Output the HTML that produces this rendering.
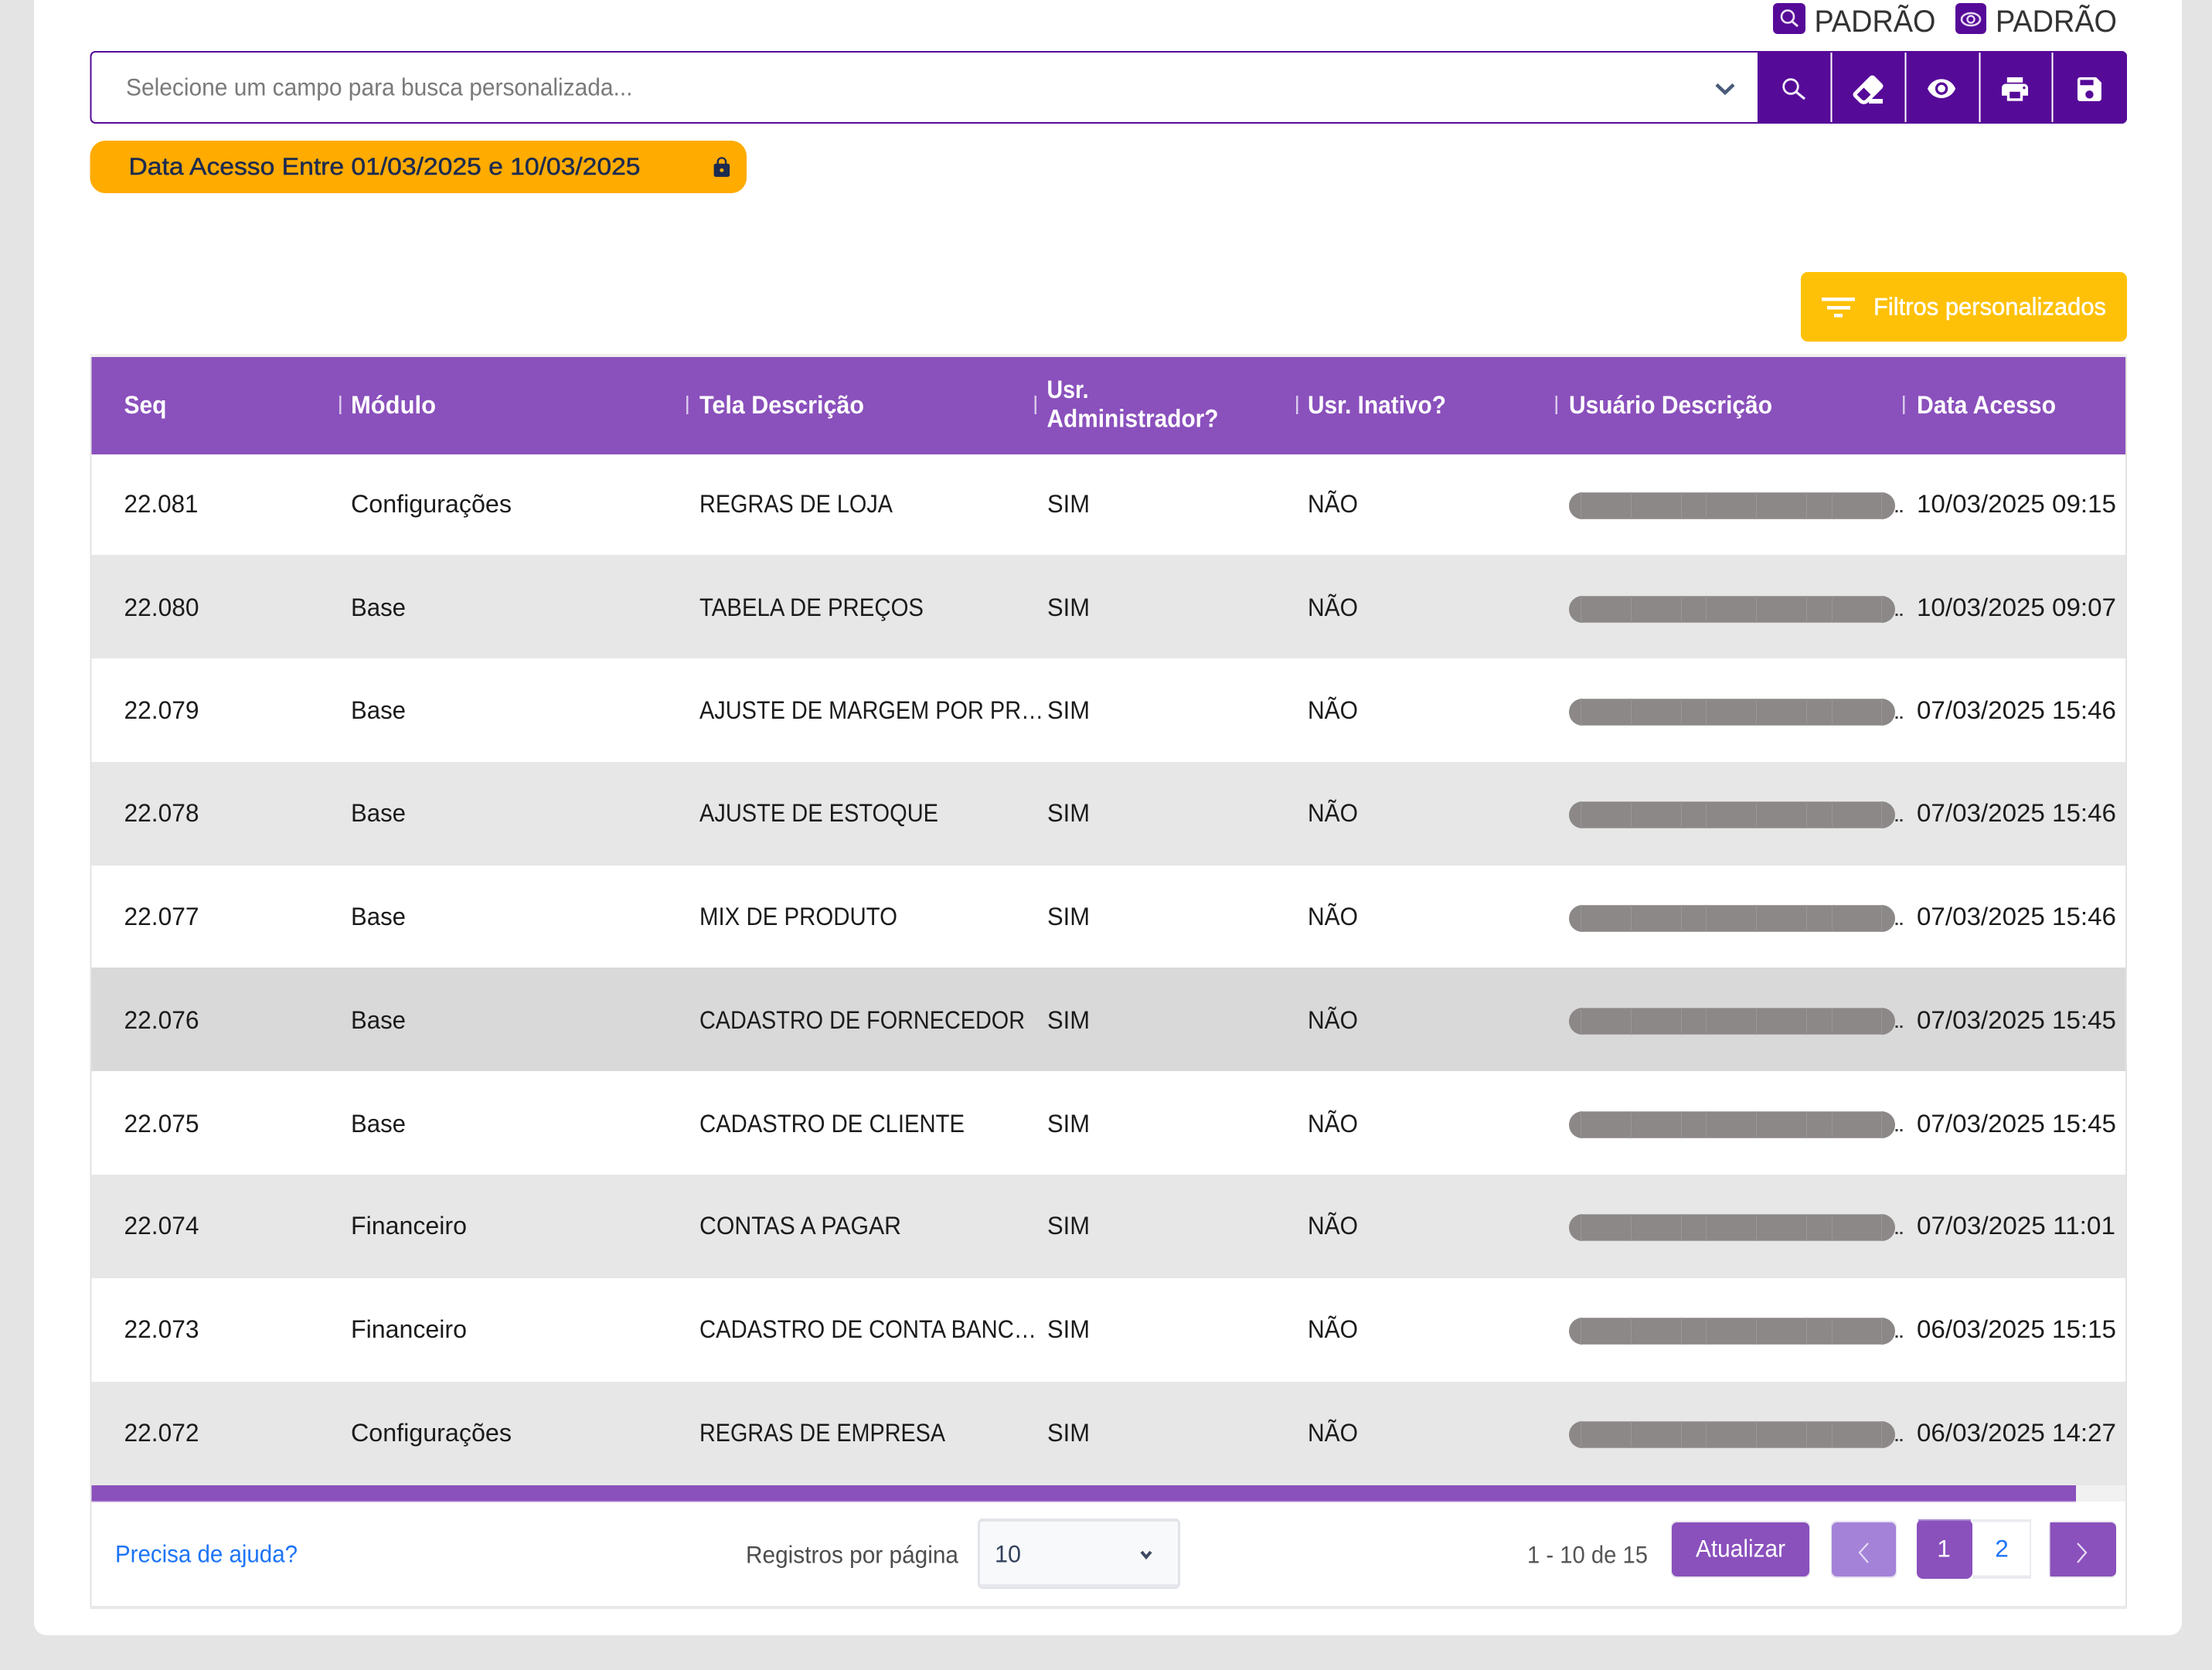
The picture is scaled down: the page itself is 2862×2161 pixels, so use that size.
<!DOCTYPE html>
<html lang="pt-BR">
<head>
<meta charset="utf-8">
<title>Acessos</title>
<style>
html,body{margin:0;padding:0;background:#e4e4e4;width:2862px;height:2161px;overflow:hidden}
svg{display:block}
text{font-family:"Liberation Sans",sans-serif;white-space:pre;transform:translate(-1px,-1px)}
.c{font-size:32.5px;fill:#1b1b1b}
.h{font-size:32px;font-weight:700;fill:#fff}
.j{font-size:31.5px}
</style>
</head>
<body>
<svg xmlns="http://www.w3.org/2000/svg" width="2862" height="2161" viewBox="0 0 2862 2161">
<defs>
<g id="bar">
<rect x="2030" y="0" width="422" height="35" rx="17.5" fill="#8c8888"/>
<rect x="2047" y="0" width="388" height="1" fill="#aaa7a7"/>
<rect x="2047" y="34" width="388" height="1" fill="#aaa7a7"/>
<rect x="2045" y="0" width="1" height="35" fill="#999696"/><rect x="2110" y="0" width="1" height="35" fill="#999696"/><rect x="2175" y="0" width="1" height="35" fill="#999696"/><rect x="2207" y="0" width="1" height="35" fill="#999696"/><rect x="2272" y="0" width="1" height="35" fill="#999696"/><rect x="2337" y="0" width="1" height="35" fill="#999696"/><rect x="2370" y="0" width="1" height="35" fill="#999696"/><rect x="2434" y="0" width="1" height="35" fill="#999696"/>
<rect x="2452.500" y="23" width="3" height="3" fill="#333"/><rect x="2458.500" y="23" width="3" height="3" fill="#333"/>
</g>
</defs>

<rect width="2862" height="2161" fill="#e4e4e4"/>
<path d="M44 0H2823V2100a16 16 0 0 1-16 16H60a16 16 0 0 1-16-16Z" fill="#fff"/>

<!-- top legends -->
<rect x="2294" y="4" width="42" height="40" rx="6" fill="#560a98"/>
<circle cx="2313" cy="21.5" r="8" fill="none" stroke="#ece2f4" stroke-width="2.6"/>
<path d="M2319 28L2326 34" stroke="#ece2f4" stroke-width="3" fill="none"/>
<text x="2348.500" y="42" font-size="40" fill="#333" textLength="157" lengthAdjust="spacingAndGlyphs">PADRÃO</text>
<rect x="2530" y="4" width="40" height="40" rx="6" fill="#560a98"/>
<ellipse cx="2550" cy="25" rx="12" ry="8" fill="none" stroke="#e6d9f0" stroke-width="2.600"/>
<circle cx="2550" cy="25" r="4.500" fill="none" stroke="#e6d9f0" stroke-width="2.400"/>
<text x="2583" y="42" font-size="40" fill="#333" textLength="157" lengthAdjust="spacingAndGlyphs">PADRÃO</text>

<!-- search bar -->
<path d="M123.500 67H2745a6 6 0 0 1 6 6V153a6 6 0 0 1-6 6H123.500a6 6 0 0 1-6-6V73a6 6 0 0 1 6-6Z" fill="#fff" stroke="#560a98" stroke-width="2"/>
<text class="j" x="164" y="124.500" fill="#7a7a7a" textLength="655.500" lengthAdjust="spacingAndGlyphs">Selecione um campo para busca personalizada...</text>
<path d="M2221 109.500L2232 120L2243 109.500" fill="none" stroke="#4a5b78" stroke-width="4.500"/>
<path d="M2274 66H2745a7 7 0 0 1 7 7V153a7 7 0 0 1-7 7H2274Z" fill="#560a98"/>
<rect x="2368.500" y="68" width="2" height="90" fill="#fff"/>
<rect x="2464.500" y="68" width="2" height="90" fill="#fff"/>
<rect x="2560.500" y="68" width="2" height="90" fill="#fff"/>
<rect x="2654.500" y="68" width="2" height="90" fill="#fff"/>
<!-- search -->
<circle cx="2317" cy="112" r="9.300" fill="none" stroke="#f4eef9" stroke-width="2.800"/>
<path d="M2324 119L2335 128" stroke="#f4eef9" stroke-width="3.200" fill="none"/>
<!-- eraser -->
<g transform="translate(2393.700 92.200) scale(1.940)"><path fill="#fff" stroke="#fff" stroke-width=".5" d="M16.24,3.56L21.19,8.5C21.97,9.29 21.97,10.55 21.19,11.34L12,20.53C10.44,22.09 7.91,22.09 6.34,20.53L2.81,17C2.03,16.21 2.03,14.95 2.81,14.16L13.41,3.56C14.2,2.78 15.46,2.78 16.24,3.56M4.22,15.58L7.76,19.11C8.54,19.9 9.8,19.9 10.59,19.11L14.12,15.58L9.17,10.63L4.22,15.58Z"/></g>
<rect x="2418" y="128" width="18" height="6" fill="#fff"/>
<!-- eye -->
<g transform="translate(2492.400 95) scale(1.640)"><path fill="#fff" fill-rule="evenodd" d="M12 4.500C7 4.500 2.730 7.610 1 12c1.730 4.390 6 7.500 11 7.500s9.270-3.110 11-7.500c-1.730-4.390-6-7.500-11-7.500zM12 17c-2.760 0-5-2.240-5-5s2.240-5 5-5 5 2.240 5 5-2.240 5-5 5z"/><circle cx="12" cy="12" r="3" fill="#fff"/></g>
<!-- print -->
<g transform="translate(2586.600 94.900) scale(1.700)"><path fill="#fff" d="M19 8H5c-1.660 0-3 1.340-3 3v6h4v4h12v-4h4v-6c0-1.660-1.340-3-3-3zm-3 11H8v-5h8v5zm3-7c-.55 0-1-.45-1-1s.45-1 1-1 1 .45 1 1-.45 1-1 1zm-1-9H6v4h12V3z"/></g>
<!-- save -->
<g transform="translate(2682.800 94.800) scale(1.720)"><path fill="#fff" d="M17 3H5c-1.110 0-2 .9-2 2v14c0 1.100.89 2 2 2h14c1.100 0 2-.9 2-2V7l-4-4zm-5 16c-1.660 0-3-1.340-3-3s1.340-3 3-3 3 1.340 3 3-1.340 3-3 3zm3-10H5V5h10v4z"/></g>

<!-- chip -->
<rect x="116.500" y="182" width="849.500" height="68" rx="20" fill="#ffab00"/>
<text class="j" x="167.500" y="227" fill="#1c2b50" stroke="#1c2b50" stroke-width=".5" textLength="662" lengthAdjust="spacingAndGlyphs">Data Acesso Entre 01/03/2025 e 10/03/2025</text>
<g transform="translate(918.500 202) scale(1.280 1.220)"><path fill="#1c2b50" d="M18 8h-1V6c0-2.760-2.240-5-5-5S7 3.240 7 6v2H6c-1.100 0-2 .9-2 2v10c0 1.100.9 2 2 2h12c1.100 0 2-.9 2-2V10c0-1.100-.9-2-2-2zm-6 9c-1.100 0-2-.9-2-2s.9-2 2-2 2 .9 2 2-.9 2-2 2zm3.100-9H8.900V6c0-1.710 1.390-3.100 3.100-3.100 1.710 0 3.100 1.390 3.100 3.100v2z"/></g>

<!-- filter button -->
<rect x="2330" y="352" width="422" height="90" rx="9" fill="#ffc107"/>
<rect x="2357" y="385" width="43" height="4.500" fill="#fff"/>
<rect x="2364" y="396" width="30" height="4.500" fill="#fff"/>
<rect x="2373" y="406" width="11" height="4.500" fill="#fff"/>
<text class="j" x="2425" y="408.500" fill="#fff" stroke="#fff" stroke-width=".5" textLength="301" lengthAdjust="spacingAndGlyphs">Filtros personalizados</text>

<!-- table frame -->
<rect x="116.500" y="458" width="2635.500" height="1624" fill="#e3e3e3"/>
<rect x="118.500" y="462" width="2631.500" height="1616" fill="#fff"/>
<rect x="116.500" y="458" width="2635.500" height="4" fill="#efefef"/>
<rect x="116.500" y="2078" width="2635.500" height="4" fill="#e9e9e9"/>

<!-- header -->
<rect x="118.500" y="462" width="2631.500" height="126" fill="#8a50bc"/>
<rect x="439" y="512" width="2.500" height="24" fill="#d9c8ea"/>
<rect x="888" y="512" width="2.500" height="24" fill="#d9c8ea"/>
<rect x="1338.500" y="512" width="2.500" height="24" fill="#d9c8ea"/>
<rect x="1677" y="512" width="2.500" height="24" fill="#d9c8ea"/>
<rect x="2012.500" y="512" width="2.500" height="24" fill="#d9c8ea"/>
<rect x="2462" y="512" width="2.500" height="24" fill="#d9c8ea"/>
<text class="h" x="161.500" y="536" textLength="55" lengthAdjust="spacingAndGlyphs">Seq</text>
<text class="h" x="455" y="536" textLength="110" lengthAdjust="spacingAndGlyphs">Módulo</text>
<text class="h" x="906" y="536" textLength="213" lengthAdjust="spacingAndGlyphs">Tela Descrição</text>
<text class="h" x="1355.500" y="516" textLength="54" lengthAdjust="spacingAndGlyphs">Usr.</text>
<text class="h" x="1355.500" y="553.500" textLength="222" lengthAdjust="spacingAndGlyphs">Administrador?</text>
<text class="h" x="1693" y="536" textLength="179" lengthAdjust="spacingAndGlyphs">Usr. Inativo?</text>
<text class="h" x="2031" y="536" textLength="263" lengthAdjust="spacingAndGlyphs">Usuário Descrição</text>
<text class="h" x="2481" y="536" textLength="180" lengthAdjust="spacingAndGlyphs">Data Acesso</text>

<!-- rows -->
<rect x="118.500" y="718" width="2631.500" height="134" fill="#e7e7e7"/>
<rect x="118.500" y="986" width="2631.500" height="134" fill="#e7e7e7"/>
<rect x="118.500" y="1252" width="2631.500" height="134" fill="#d9d9d9"/>
<rect x="118.500" y="1520" width="2631.500" height="134" fill="#e7e7e7"/>
<rect x="118.500" y="1788" width="2631.500" height="134" fill="#e7e7e7"/>

<use href="#bar" y="637"/><use href="#bar" y="771"/><use href="#bar" y="904"/><use href="#bar" y="1037"/><use href="#bar" y="1171"/><use href="#bar" y="1304"/><use href="#bar" y="1438"/><use href="#bar" y="1571"/><use href="#bar" y="1705"/><use href="#bar" y="1839"/>

<text class="c" x="161.500" y="664" textLength="96" lengthAdjust="spacingAndGlyphs">22.081</text>
<text class="c" x="455" y="664" textLength="208" lengthAdjust="spacingAndGlyphs">Configurações</text>
<text class="c" x="906" y="664" textLength="250" lengthAdjust="spacingAndGlyphs">REGRAS DE LOJA</text>
<text class="c" x="1356" y="664" textLength="55" lengthAdjust="spacingAndGlyphs">SIM</text>
<text class="c" x="1693" y="664" textLength="65" lengthAdjust="spacingAndGlyphs">NÃO</text>
<text class="c" x="2481" y="664" textLength="258" lengthAdjust="spacingAndGlyphs">10/03/2025 09:15</text>

<text class="c" x="161.500" y="798" textLength="97" lengthAdjust="spacingAndGlyphs">22.080</text>
<text class="c" x="455" y="798" textLength="71" lengthAdjust="spacingAndGlyphs">Base</text>
<text class="c" x="906" y="798" textLength="290" lengthAdjust="spacingAndGlyphs">TABELA DE PREÇOS</text>
<text class="c" x="1356" y="798" textLength="55" lengthAdjust="spacingAndGlyphs">SIM</text>
<text class="c" x="1693" y="798" textLength="65" lengthAdjust="spacingAndGlyphs">NÃO</text>
<text class="c" x="2481" y="798" textLength="258" lengthAdjust="spacingAndGlyphs">10/03/2025 09:07</text>

<text class="c" x="161.500" y="931" textLength="97" lengthAdjust="spacingAndGlyphs">22.079</text>
<text class="c" x="455" y="931" textLength="71" lengthAdjust="spacingAndGlyphs">Base</text>
<text class="c" x="906" y="931" textLength="445" lengthAdjust="spacingAndGlyphs">AJUSTE DE MARGEM POR PR…</text>
<text class="c" x="1356" y="931" textLength="55" lengthAdjust="spacingAndGlyphs">SIM</text>
<text class="c" x="1693" y="931" textLength="65" lengthAdjust="spacingAndGlyphs">NÃO</text>
<text class="c" x="2481" y="931" textLength="258" lengthAdjust="spacingAndGlyphs">07/03/2025 15:46</text>

<text class="c" x="161.500" y="1064" textLength="97" lengthAdjust="spacingAndGlyphs">22.078</text>
<text class="c" x="455" y="1064" textLength="71" lengthAdjust="spacingAndGlyphs">Base</text>
<text class="c" x="906" y="1064" textLength="309" lengthAdjust="spacingAndGlyphs">AJUSTE DE ESTOQUE</text>
<text class="c" x="1356" y="1064" textLength="55" lengthAdjust="spacingAndGlyphs">SIM</text>
<text class="c" x="1693" y="1064" textLength="65" lengthAdjust="spacingAndGlyphs">NÃO</text>
<text class="c" x="2481" y="1064" textLength="258" lengthAdjust="spacingAndGlyphs">07/03/2025 15:46</text>

<text class="c" x="161.500" y="1198" textLength="97" lengthAdjust="spacingAndGlyphs">22.077</text>
<text class="c" x="455" y="1198" textLength="71" lengthAdjust="spacingAndGlyphs">Base</text>
<text class="c" x="906" y="1198" textLength="256" lengthAdjust="spacingAndGlyphs">MIX DE PRODUTO</text>
<text class="c" x="1356" y="1198" textLength="55" lengthAdjust="spacingAndGlyphs">SIM</text>
<text class="c" x="1693" y="1198" textLength="65" lengthAdjust="spacingAndGlyphs">NÃO</text>
<text class="c" x="2481" y="1198" textLength="258" lengthAdjust="spacingAndGlyphs">07/03/2025 15:46</text>

<text class="c" x="161.500" y="1332" textLength="97" lengthAdjust="spacingAndGlyphs">22.076</text>
<text class="c" x="455" y="1332" textLength="71" lengthAdjust="spacingAndGlyphs">Base</text>
<text class="c" x="906" y="1332" textLength="421" lengthAdjust="spacingAndGlyphs">CADASTRO DE FORNECEDOR</text>
<text class="c" x="1356" y="1332" textLength="55" lengthAdjust="spacingAndGlyphs">SIM</text>
<text class="c" x="1693" y="1332" textLength="65" lengthAdjust="spacingAndGlyphs">NÃO</text>
<text class="c" x="2481" y="1332" textLength="258" lengthAdjust="spacingAndGlyphs">07/03/2025 15:45</text>

<text class="c" x="161.500" y="1466" textLength="97" lengthAdjust="spacingAndGlyphs">22.075</text>
<text class="c" x="455" y="1466" textLength="71" lengthAdjust="spacingAndGlyphs">Base</text>
<text class="c" x="906" y="1466" textLength="343" lengthAdjust="spacingAndGlyphs">CADASTRO DE CLIENTE</text>
<text class="c" x="1356" y="1466" textLength="55" lengthAdjust="spacingAndGlyphs">SIM</text>
<text class="c" x="1693" y="1466" textLength="65" lengthAdjust="spacingAndGlyphs">NÃO</text>
<text class="c" x="2481" y="1466" textLength="258" lengthAdjust="spacingAndGlyphs">07/03/2025 15:45</text>

<text class="c" x="161.500" y="1598" textLength="97" lengthAdjust="spacingAndGlyphs">22.074</text>
<text class="c" x="455" y="1598" textLength="150" lengthAdjust="spacingAndGlyphs">Financeiro</text>
<text class="c" x="906" y="1598" textLength="261" lengthAdjust="spacingAndGlyphs">CONTAS A PAGAR</text>
<text class="c" x="1356" y="1598" textLength="55" lengthAdjust="spacingAndGlyphs">SIM</text>
<text class="c" x="1693" y="1598" textLength="65" lengthAdjust="spacingAndGlyphs">NÃO</text>
<text class="c" x="2481" y="1598" textLength="257" lengthAdjust="spacingAndGlyphs">07/03/2025 11:01</text>

<text class="c" x="161.500" y="1732" textLength="97" lengthAdjust="spacingAndGlyphs">22.073</text>
<text class="c" x="455" y="1732" textLength="150" lengthAdjust="spacingAndGlyphs">Financeiro</text>
<text class="c" x="906" y="1732" textLength="436" lengthAdjust="spacingAndGlyphs">CADASTRO DE CONTA BANC…</text>
<text class="c" x="1356" y="1732" textLength="55" lengthAdjust="spacingAndGlyphs">SIM</text>
<text class="c" x="1693" y="1732" textLength="65" lengthAdjust="spacingAndGlyphs">NÃO</text>
<text class="c" x="2481" y="1732" textLength="258" lengthAdjust="spacingAndGlyphs">06/03/2025 15:15</text>

<text class="c" x="161.500" y="1866" textLength="97" lengthAdjust="spacingAndGlyphs">22.072</text>
<text class="c" x="455" y="1866" textLength="208" lengthAdjust="spacingAndGlyphs">Configurações</text>
<text class="c" x="906" y="1866" textLength="318" lengthAdjust="spacingAndGlyphs">REGRAS DE EMPRESA</text>
<text class="c" x="1356" y="1866" textLength="55" lengthAdjust="spacingAndGlyphs">SIM</text>
<text class="c" x="1693" y="1866" textLength="65" lengthAdjust="spacingAndGlyphs">NÃO</text>
<text class="c" x="2481" y="1866" textLength="258" lengthAdjust="spacingAndGlyphs">06/03/2025 14:27</text>

<!-- scrollbar -->
<rect x="118.500" y="1922" width="2631.500" height="21" fill="#f1f1f1"/>
<rect x="118.500" y="1922" width="2567.500" height="21" fill="#8a50bc"/>
<rect x="118.500" y="1942" width="2567.500" height="1.500" fill="#aa80d0"/>

<!-- footer -->
<text x="150" y="2022.500" font-size="31.500" fill="#1d74f5" textLength="236" lengthAdjust="spacingAndGlyphs">Precisa de ajuda?</text>
<text x="966" y="2023.500" font-size="31.500" fill="#4d4d4d" textLength="275" lengthAdjust="spacingAndGlyphs">Registros por página</text>
<rect x="1266.500" y="1966.500" width="259" height="88" rx="5" fill="#f8f9fb" stroke="#e2e4ea" stroke-width="3"/>
<rect x="1268" y="1965" width="256" height="4" fill="#e2e4ea"/>
<rect x="1268" y="2050" width="256" height="4" fill="#e6e8ed"/>
<text x="1288" y="2022.500" font-size="31.500" fill="#33415c" textLength="34" lengthAdjust="spacingAndGlyphs">10</text>
<path d="M1477 2008L1483 2015L1489 2008" fill="none" stroke="#3d4a60" stroke-width="4"/>

<text x="1977" y="2023.500" font-size="31.500" fill="#555" textLength="156" lengthAdjust="spacingAndGlyphs">1 - 10 de 15</text>

<rect x="2162" y="1968" width="180" height="74" rx="7" fill="#e8e6ee"/>
<rect x="2163" y="1970" width="178" height="70" rx="7" fill="#8a50bc"/>
<text x="2195" y="2015.500" font-size="31.500" fill="#fff" textLength="116" lengthAdjust="spacingAndGlyphs">Atualizar</text>

<rect x="2369" y="1968" width="85" height="74" rx="7" fill="#e5dff0"/>
<rect x="2370" y="1970" width="83" height="70" rx="7" fill="#a482d8"/>
<path d="M2417 1997L2406 2009L2417 2022" fill="none" stroke="#e6dcf3" stroke-width="2.200"/>

<rect x="2552" y="1966" width="76" height="77" fill="#e9ebef"/>
<rect x="2552" y="1969.500" width="74" height="69" fill="#fff"/>
<rect x="2480" y="1966" width="72" height="77" rx="8" fill="#8a50bc"/>
<rect x="2482" y="1966" width="68" height="2" fill="#a984d2"/>
<text x="2516" y="2015.500" font-size="31.500" fill="#fff" text-anchor="middle">1</text>
<text x="2591" y="2015.500" font-size="31.500" fill="#1d74f5" text-anchor="middle">2</text>

<rect x="2651" y="1968" width="87" height="74" rx="7" fill="#e8e6ee"/>
<path d="M2652.500 1970H2731a7 7 0 0 1 7 7V2033a7 7 0 0 1-7 7H2652.500Z" fill="#8a50bc"/>
<path d="M2688 1997L2699 2009L2688 2022" fill="none" stroke="#e6dcf3" stroke-width="2.200"/>
</svg>
</body>
</html>
